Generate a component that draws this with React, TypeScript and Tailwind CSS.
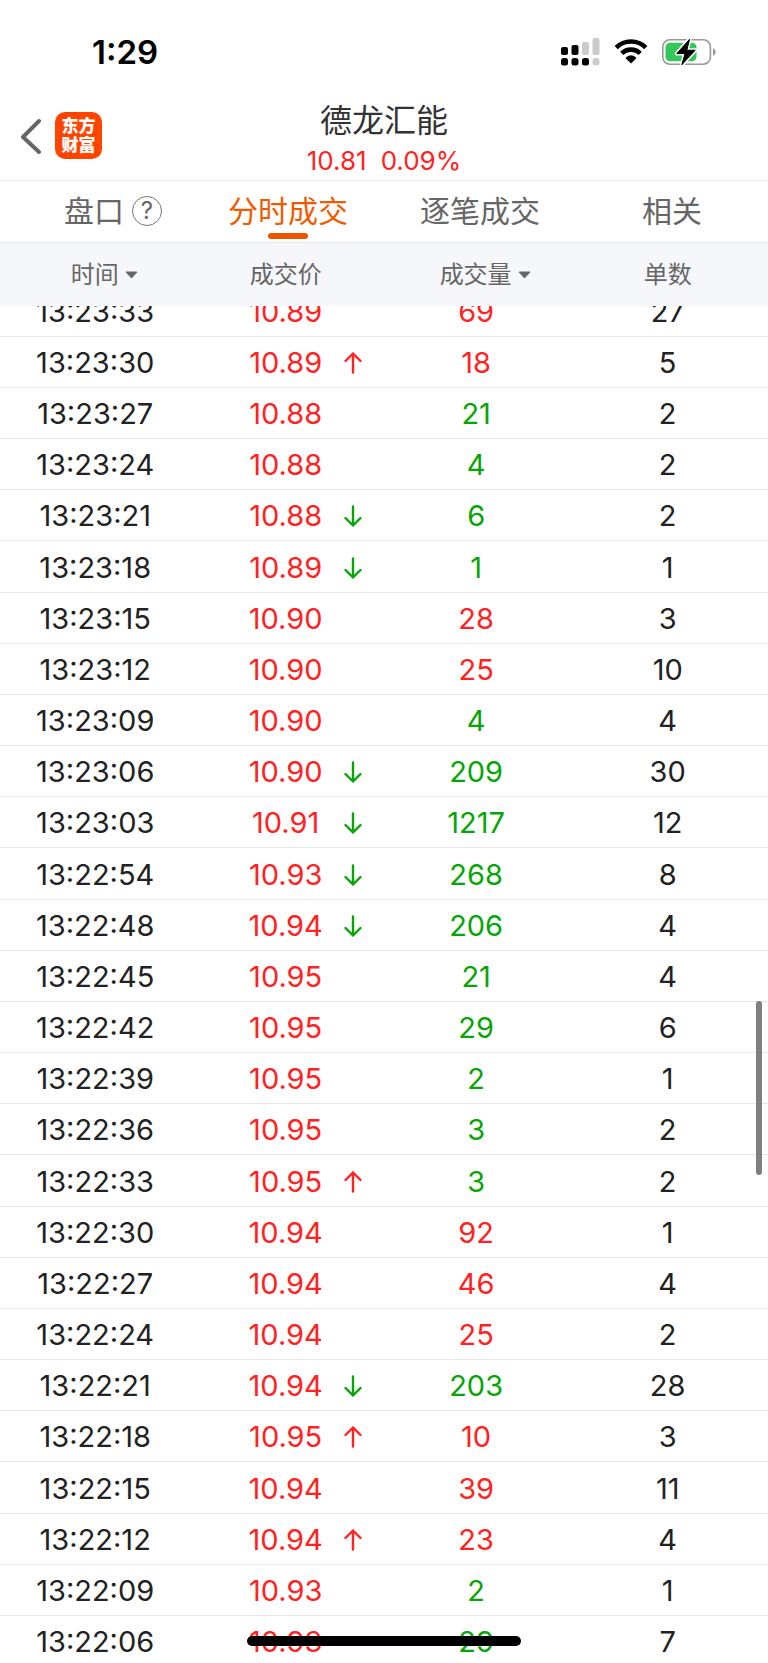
import { useLayoutEffect, useRef } from "react";
import clsx from "clsx";

type Side = "buy" | "sell";
type Move = "up" | "down";
type Trade = [time: string, price: string, volume: number, side: Side, count: number, move?: Move];

const TRADES: Trade[] = [
  ["13:23:33", "10.89", 69, "buy", 27],
  ["13:23:30", "10.89", 18, "buy", 5, "up"],
  ["13:23:27", "10.88", 21, "sell", 2],
  ["13:23:24", "10.88", 4, "sell", 2],
  ["13:23:21", "10.88", 6, "sell", 2, "down"],
  ["13:23:18", "10.89", 1, "sell", 1, "down"],
  ["13:23:15", "10.90", 28, "buy", 3],
  ["13:23:12", "10.90", 25, "buy", 10],
  ["13:23:09", "10.90", 4, "sell", 4],
  ["13:23:06", "10.90", 209, "sell", 30, "down"],
  ["13:23:03", "10.91", 1217, "sell", 12, "down"],
  ["13:22:54", "10.93", 268, "sell", 8, "down"],
  ["13:22:48", "10.94", 206, "sell", 4, "down"],
  ["13:22:45", "10.95", 21, "sell", 4],
  ["13:22:42", "10.95", 29, "sell", 6],
  ["13:22:39", "10.95", 2, "sell", 1],
  ["13:22:36", "10.95", 3, "sell", 2],
  ["13:22:33", "10.95", 3, "sell", 2, "up"],
  ["13:22:30", "10.94", 92, "buy", 1],
  ["13:22:27", "10.94", 46, "buy", 4],
  ["13:22:24", "10.94", 25, "buy", 2],
  ["13:22:21", "10.94", 203, "sell", 28, "down"],
  ["13:22:18", "10.95", 10, "buy", 3, "up"],
  ["13:22:15", "10.94", 39, "buy", 11],
  ["13:22:12", "10.94", 23, "buy", 4, "up"],
  ["13:22:09", "10.93", 2, "sell", 1],
  ["13:22:06", "10.93", 29, "sell", 7],
];

const TABS = ["盘口", "分时成交", "逐笔成交", "相关"];

function SignalIcon() {
  return (
    <svg width="39" height="28" viewBox="0 0 39 28" aria-hidden="true">
      <rect x="0" y="9" width="7" height="8" rx="2" />
      <rect x="10.5" y="7" width="7" height="10" rx="2" />
      <rect x="21" y="4" width="7" height="13" rx="2" fill="#cbcbcb" />
      <rect x="31.5" y="0" width="7" height="17" rx="2" fill="#cbcbcb" />
      <rect x="0" y="20" width="7" height="7.5" rx="2.5" />
      <rect x="10.5" y="20" width="7" height="7.5" rx="2.5" />
      <rect x="21" y="20" width="7" height="7.5" rx="2.5" />
      <rect x="31.5" y="20" width="7" height="7.5" rx="2.5" fill="#cbcbcb" />
    </svg>
  );
}

function WifiIcon() {
  return (
    <svg width="34" height="25" viewBox="0 0 34 25" aria-hidden="true">
      <g fill="none" stroke="#000" strokeWidth="4.6">
        <path d="M2.2 8.6a21 21 0 0 1 29.6 0" />
        <path d="M7.8 14.4a13 13 0 0 1 18.4 0" />
      </g>
      <path d="M17 24.4l-4.9-4.7a1 1 0 0 1 .1-1.5 7.8 7.8 0 0 1 9.6 0 1 1 0 0 1 .1 1.5z" />
    </svg>
  );
}

function BatteryIcon() {
  return (
    <svg width="54" height="28" viewBox="0 0 54 28" aria-hidden="true">
      <rect x="0.8" y="1.8" width="47.6" height="24.4" rx="7" fill="none" stroke="#999" strokeWidth="1.6" />
      <path d="M51 10.2c1.6.6 2.6 2 2.6 3.8s-1 3.2-2.6 3.8z" fill="#999" />
      <rect x="3.5" y="4.7" width="31" height="18.6" rx="4.5" fill="#34c759" />
      <path
        d="M27.6 1.2L14.8 15.6h8.2l-3.2 11.2L33.2 12.2h-8.4z"
        stroke="#fff"
        strokeWidth="4"
        strokeLinejoin="round"
      />
      <path d="M27.6 1.2L14.8 15.6h8.2l-3.2 11.2L33.2 12.2h-8.4z" stroke="#000" strokeLinejoin="round" />
    </svg>
  );
}

function Caret() {
  return (
    <svg width="13" height="8" viewBox="0 0 13 8" aria-hidden="true">
      <path d="M1 1h11L6.5 7z" fill="#666" stroke="#666" strokeLinejoin="round" />
    </svg>
  );
}

function MoveArrow({ move }: { move: Move }) {
  return (
    <svg
      width="18"
      height="22"
      viewBox="0 0 18 22"
      fill="none"
      stroke="currentColor"
      strokeWidth="2.4"
      strokeLinecap="round"
      strokeLinejoin="round"
      className={move === "up" ? "text-[#ff2222]" : "rotate-180 text-[#08a508]"}
      role="img"
      aria-label={move === "up" ? "上涨" : "下跌"}
    >
      <path d="M9 20.5V1.5M1.5 9L9 1.5 16.5 9" />
    </svg>
  );
}

function StatusBar() {
  return (
    <div className="flex h-[90px] items-center justify-between pt-[13px] pr-[52px] pl-[92px]">
      <span className="text-[33px] leading-10 font-semibold text-black">1:29</span>
      <div className="flex items-center gap-[14px]">
        <SignalIcon />
        <WifiIcon />
        <BatteryIcon />
      </div>
    </div>
  );
}

function TitleBar() {
  return (
    <header className="grid h-[91px] grid-cols-[1fr_auto_1fr] items-center border-b border-[#ececee]">
      <div className="flex items-center gap-[13px] pl-5">
        <button type="button" aria-label="返回">
          <svg width="22" height="36" viewBox="0 0 22 36" fill="none" aria-hidden="true">
            <path d="M19 3L3 19l16 15" stroke="#666" strokeWidth="4" strokeLinecap="round" strokeLinejoin="round" />
          </svg>
        </button>
        <a
          href="#home"
          className="flex size-[47px] flex-col items-center justify-center rounded-[10px] bg-[#ff4400] text-[17px] leading-[19px] font-black text-white"
        >
          <span>东方</span>
          <span>财富</span>
        </a>
      </div>
      <div className="pt-[11px] text-center">
        <h1 className="text-[32px] leading-10 text-[#333]">德龙汇能</h1>
        <p className="flex justify-center gap-[14px] text-[26px] leading-10 text-[#ff2222]">
          <span>10.81</span>
          <span>0.09%</span>
        </p>
      </div>
    </header>
  );
}

function Tabs() {
  return (
    <nav className="grid h-[62px] shrink-0 grid-cols-4 border-b border-[#e8e9ec]">
      {TABS.map((tab, i) => (
        <button
          key={tab}
          type="button"
          className={clsx(
            "flex flex-col items-center pt-2 text-[30px] leading-[44px]",
            i === 1 ? "text-[#f05a00]" : "text-[#666]",
          )}
        >
          <span className="flex items-center gap-2">
            {i === 0 && <span className="w-[26px]" />}
            {tab}
            {i === 0 && (
              <span className="flex size-[30px] items-center justify-center rounded-full border border-[#777] text-[24px]">
                ?
              </span>
            )}
          </span>
          {i === 1 && <span className="h-[6px] w-10 rounded-full bg-[#ee5500]" />}
        </button>
      ))}
    </nav>
  );
}

function SortHeader({ label }: { label: string }) {
  return (
    <button type="button" className="inline-flex items-center gap-[6px] pl-[18px]">
      {label}
      <Caret />
    </button>
  );
}

function TradeTable() {
  const scroller = useRef<HTMLDivElement>(null);

  useLayoutEffect(() => {
    scroller.current?.scrollTo(0, 20);
  }, []);

  return (
    <main className="relative min-h-0 flex-1">
      <div ref={scroller} className="h-full overflow-y-auto [scrollbar-width:none]">
        <table className="w-full table-fixed border-separate border-spacing-0 text-center">
          <thead className="sticky top-0 z-10 bg-[#f6f7fa] text-[24px] text-[#666]">
            <tr className="h-[63px]">
              <th className="w-[24.8%] p-0 font-normal">
                <SortHeader label="时间" />
              </th>
              <th className="w-[24.8%] p-0 font-normal">成交价</th>
              <th className="w-[24.8%] p-0 font-normal">
                <SortHeader label="成交量" />
              </th>
              <th className="p-0 pr-1 font-normal">单数</th>
            </tr>
          </thead>
          <tbody className="text-[29px] leading-10 text-[#222] [&_td]:border-b [&_td]:border-[#e6e6ea] [&_td]:pt-[2px]">
            {TRADES.map(([time, price, volume, side, count, move]) => (
              <tr key={time} className="h-[51px] nth-[6n]:h-[52px]">
                <td className="p-0">{time}</td>
                <td className="p-0">
                  <div className="grid grid-cols-[1fr_116px_1fr] items-center">
                    <span className="col-start-2 text-[#ff2222]">{price}</span>
                    {move && <MoveArrow move={move} />}
                  </div>
                </td>
                <td className={clsx("p-0", side === "buy" ? "text-[#ff2222]" : "text-[#08a508]")}>{volume}</td>
                <td className="p-0 pr-1">{count}</td>
              </tr>
            ))}
          </tbody>
        </table>
      </div>
      <div className="absolute top-[758px] right-[6px] z-20 h-[174px] w-[6px] rounded-full bg-[#808080]" />
    </main>
  );
}

export default function App() {
  return (
    <div className="relative flex h-screen flex-col overflow-hidden bg-white font-[Inter,'Noto_Sans_CJK_SC',sans-serif]">
      <StatusBar />
      <TitleBar />
      <Tabs />
      <TradeTable />
      <div className="absolute bottom-[17px] left-1/2 z-30 h-[10px] w-[274px] -translate-x-1/2 rounded-full bg-black" />
    </div>
  );
}
